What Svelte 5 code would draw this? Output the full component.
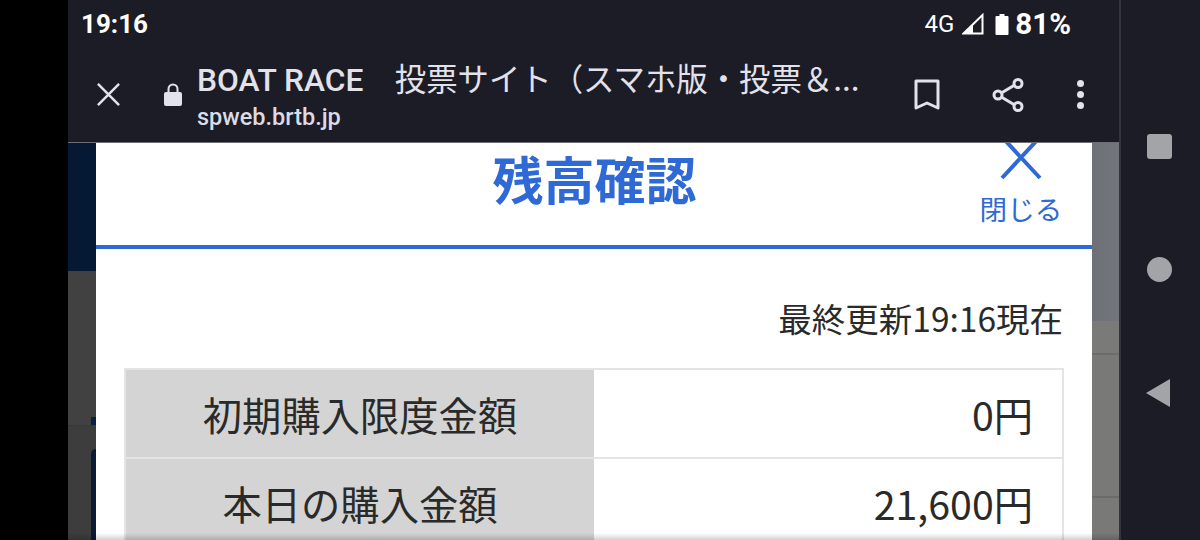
<script>
  const rows = [
    { label: '初期購入限度金額', value: '0円' },
    { label: '本日の購入金額', value: '21,600円' }
  ];
</script>

<div class="screen">
  <div class="bezel"></div>

  <div class="phone">
    <header class="chrome">
      <div class="status">
        <span class="time">19:16</span>
        <div class="status-right">
          <span class="net">4G</span>
          <svg class="signal" width="22" height="22" viewBox="0 0 22 22">
            <path d="M1.500 20.500 20.500 2v18.500Z" fill="none" stroke="#fff" stroke-width="2" />
            <path d="M1 21 11 11.500V21Z" fill="#fff" />
          </svg>
          <svg class="battery" width="14" height="22" viewBox="0 0 14 22">
            <path d="M1.500 3h3V1h5v2h3a1 1 0 0 1 1 1v17a1 1 0 0 1-1 1h-11a1 1 0 0 1-1-1V4a1 1 0 0 1 1-1Z" fill="#fff" />
          </svg>
          <span class="pct">81%</span>
        </div>
      </div>

      <div class="toolbar">
        <svg class="close-tab" width="26" height="26" viewBox="0 0 26 26">
          <path d="M2 2 24 24M24 2 2 24" stroke="#e3e2ea" stroke-width="2.600" fill="none" />
        </svg>
        <svg class="lock" width="20" height="26" viewBox="0 0 20 26">
          <path d="M5.500 10V7a4.500 4.500 0 0 1 9 0v3" fill="none" stroke="#e3e2ea" stroke-width="2" />
          <rect x="1" y="10" width="18" height="14" rx="2" fill="#e3e2ea" />
        </svg>
        <div class="titles">
          <div class="page-title"><span class="latin">BOAT RACE</span><span class="jp-title">　投票サイト（スマホ版・投票＆...</span></div>
          <div class="url">spweb.brtb.jp</div>
        </div>
        <svg class="bookmark" width="26" height="32" viewBox="0 0 26 32">
          <path d="M2 2h22v27l-11-5-11 5Z" fill="none" stroke="#e3e2ea" stroke-width="3" stroke-linejoin="round" />
        </svg>
        <svg class="share" width="32" height="34" viewBox="0 0 32 34">
          <path d="M6 17 26 5M6 17l20 12" stroke="#e3e2ea" stroke-width="3" />
          <circle cx="6" cy="17" r="4" fill="#1b1c25" stroke="#e3e2ea" stroke-width="3" />
          <circle cx="26" cy="5.500" r="4" fill="#1b1c25" stroke="#e3e2ea" stroke-width="3" />
          <circle cx="26" cy="28.500" r="4" fill="#1b1c25" stroke="#e3e2ea" stroke-width="3" />
        </svg>
        <div class="more"><i></i><i></i><i></i></div>
      </div>
    </header>

    <main class="stage">
      <div class="strip left">
        <div class="navy"></div>
        <div class="dim-a"><span class="tick"></span></div>
        <div class="dim-b"><span class="card-edge"></span></div>
      </div>

      <section class="modal">
        <div class="modal-head">
          <h1>残高確認</h1>
          <div class="modal-close">
            <svg width="44" height="38" viewBox="0 0 44 38">
              <path d="M3 -6 41 35M41 -6 3 35" stroke="#2f69d6" stroke-width="4" fill="none" />
            </svg>
            <span>閉じる</span>
          </div>
        </div>
        <div class="modal-body">
          <p class="updated">最終更新19:16現在</p>
          <div class="table">
            {#each rows as row}
              <div class="row">
                <div class="label">{row.label}</div>
                <div class="value">{row.value}</div>
              </div>
            {/each}
          </div>
        </div>
      </section>

      <div class="strip right">
        <div class="slate"></div>
        <div class="grey-a"></div>
        <div class="grey-b"></div>
        <div class="grey-c"></div>
      </div>
      <div class="bottom-shade"></div>
    </main>
  </div>

  <nav class="softkeys">
    <span class="key-square"></span>
    <span class="key-circle"></span>
    <svg width="26" height="30" viewBox="0 0 26 30">
      <path d="M1 15 24 1.500a.5.5 0 0 1 1 .5v26a.5.5 0 0 1-1 .5Z" fill="#a3a4a8" />
    </svg>
  </nav>
</div>

<style>
  :global(body) {
    margin: 0;
    background: #000;
  }
  .screen {
    display: flex;
    width: 1200px;
    height: 540px;
    overflow: hidden;
    font-family: Roboto, "Noto Sans CJK JP", sans-serif;
  }
  .bezel {
    width: 68px;
    flex: none;
    background: #000;
  }
  .phone {
    width: 1051px;
    flex: none;
    display: flex;
    flex-direction: column;
  }

  .chrome {
    height: 142px;
    flex: none;
    background: #1b1c25;
    border-bottom: 1px solid #6d6e76;
  }
  .status {
    height: 47px;
    display: flex;
    align-items: center;
    justify-content: space-between;
    padding: 0 48px 0 13px;
    color: #fff;
  }
  .time {
    font-size: 26px;
    font-weight: 700;
  }
  .status-right {
    display: flex;
    align-items: center;
  }
  .net {
    font-size: 24px;
    margin-right: 8px;
  }
  .signal {
    margin-right: 11px;
  }
  .battery {
    margin-right: 6px;
  }
  .pct {
    font-size: 29.5px;
    font-weight: 700;
  }
  .toolbar {
    display: flex;
    align-items: center;
    height: 95px;
    color: #e3e2ea;
  }
  .close-tab {
    margin: 0 0 1px 28px;
    width: 25px;
    height: 25px;
  }
  .lock {
    margin: 0 0 0 42px;
  }
  .titles {
    width: 690px;
    margin-left: 14px;
    padding-top: 3px;
  }
  .page-title {
    font-size: 31px;
    line-height: 40px;
    white-space: nowrap;
  }
  .latin {
    font-weight: 500;
    font-size: 31.7px;
  }
  .jp-title {
    font-family: "Noto Sans CJK JP", sans-serif;
    font-size: 31.4px;
    font-weight: 400;
  }
  .url {
    font-size: 23.5px;
    font-weight: 500;
    line-height: 33px;
    color: #dcdbe3;
  }
  .bookmark {
    margin-left: 27px;
  }
  .share {
    margin-left: 52px;
  }
  .more {
    display: flex;
    flex-direction: column;
    gap: 4px;
    margin-left: 53px;
  }
  .more i {
    width: 7px;
    height: 7px;
    border-radius: 50%;
    background: #e3e2ea;
  }

  .stage {
    position: relative;
    flex: 1;
    display: flex;
    min-height: 0;
  }
  .strip {
    flex: none;
    display: flex;
    flex-direction: column;
  }
  .strip.left {
    width: 28px;
  }
  .navy {
    height: 128px;
    background: #051834;
  }
  .dim-a {
    height: 155px;
    background: #414141;
    display: flex;
    align-items: flex-end;
    justify-content: flex-end;
    border-bottom: 1px solid #383838;
    box-sizing: border-box;
  }
  .tick {
    width: 5px;
    height: 8px;
    background: #0a2147;
  }
  .dim-b {
    flex: 1;
    background: #3d3d3d;
    display: flex;
    justify-content: flex-end;
    padding-top: 23px;
  }
  .card-edge {
    width: 5px;
    background: #0b1a36;
    border-top-left-radius: 6px;
  }
  .modal {
    width: 996px;
    flex: none;
    background: #fff;
    display: flex;
    flex-direction: column;
  }
  .modal-head {
    position: relative;
    height: 102px;
    flex: none;
    border-bottom: 4px solid #2f69d6;
    display: flex;
    justify-content: center;
  }
  h1 {
    margin: 0 0 0 1px;
    font-size: 51px;
    line-height: 71px;
    font-weight: 700;
    color: #2f69d6;
    font-family: "Noto Sans CJK JP", sans-serif;
  }
  .modal-close {
    position: absolute;
    right: 30px;
    top: 0;
    width: 82px;
    display: flex;
    flex-direction: column;
    align-items: center;
    color: #2f69d6;
    font-family: "Noto Sans CJK JP", sans-serif;
    font-size: 27.6px;
    line-height: 40px;
    white-space: nowrap;
  }
  .modal-close svg {
    display: block;
    margin-bottom: 7px;
  }
  .modal-body {
    padding: 46px 28px 0;
    color: #2a2a2a;
    font-family: "Noto Sans CJK JP", "Noto Sans", sans-serif;
  }
  .updated {
    margin: 0 1px 27px 0;
    text-align: right;
    font-size: 33.5px;
    line-height: 46px;
  }
  .table {
    border: solid #e4e4e4;
    border-width: 2px 2px 0;
    width: 940px;
    box-sizing: border-box;
  }
  .row {
    display: flex;
    height: 87px;
    border-bottom: 2px solid #e4e4e4;
    font-size: 39.3px;
  }
  .label {
    width: 468px;
    background: #d4d4d4;
    display: flex;
    align-items: center;
    justify-content: center;
    padding-bottom: 1px;
  }
  .value {
    flex: 1;
    display: flex;
    align-items: center;
    justify-content: flex-end;
    padding: 0 29px 1px 0;
  }
  .strip.right {
    width: 27px;
  }
  .slate {
    height: 178px;
    background: linear-gradient(90deg, #6d7077, #72757a);
  }
  .grey-a {
    height: 32px;
    background: #7a7a78;
    border-bottom: 2px solid #6c6c6c;
  }
  .grey-b {
    height: 141px;
    background: #797977;
    border-bottom: 2px solid #6b6b6b;
  }
  .grey-c {
    flex: 1;
    background: #797977;
  }
  .bottom-shade {
    position: absolute;
    left: 0;
    right: 0;
    bottom: 0;
    height: 7px;
    background: linear-gradient(rgba(0, 0, 0, 0), rgba(0, 0, 0, 0.18));
  }

  .softkeys {
    flex: 1;
    background: #1b1c25;
    border-left: 2px solid #32333c;
    display: flex;
    flex-direction: column;
    align-items: center;
    padding: 134px 2px 0 0;
    box-sizing: border-box;
  }
  .key-square {
    width: 25px;
    height: 25px;
    border-radius: 3px;
    background: #a3a4a8;
  }
  .key-circle {
    width: 25px;
    height: 25px;
    border-radius: 50%;
    background: #a3a4a8;
    margin-top: 98px;
  }
  .softkeys svg {
    margin-top: 96px;
    margin-left: -3px;
  }
</style>
